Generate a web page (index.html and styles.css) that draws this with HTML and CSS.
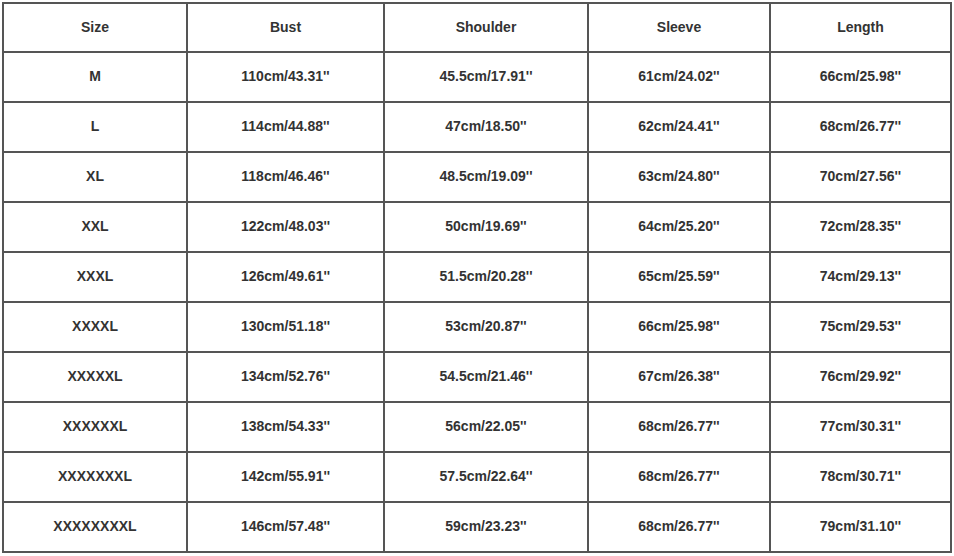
FILE: index.html
```html
<!DOCTYPE html>
<html>
<head>
<meta charset="utf-8">
<link rel="stylesheet" href="styles.css">
</head>
<body>
<div class="chart">
  <div class="cell">Size</div><div class="cell">Bust</div><div class="cell">Shoulder</div><div class="cell">Sleeve</div><div class="cell">Length</div>
  <div class="cell">M</div><div class="cell">110cm/43.31''</div><div class="cell">45.5cm/17.91''</div><div class="cell">61cm/24.02''</div><div class="cell">66cm/25.98''</div>
  <div class="cell">L</div><div class="cell">114cm/44.88''</div><div class="cell">47cm/18.50''</div><div class="cell">62cm/24.41''</div><div class="cell">68cm/26.77''</div>
  <div class="cell">XL</div><div class="cell">118cm/46.46''</div><div class="cell">48.5cm/19.09''</div><div class="cell">63cm/24.80''</div><div class="cell">70cm/27.56''</div>
  <div class="cell">XXL</div><div class="cell">122cm/48.03''</div><div class="cell">50cm/19.69''</div><div class="cell">64cm/25.20''</div><div class="cell">72cm/28.35''</div>
  <div class="cell">XXXL</div><div class="cell">126cm/49.61''</div><div class="cell">51.5cm/20.28''</div><div class="cell">65cm/25.59''</div><div class="cell">74cm/29.13''</div>
  <div class="cell">XXXXL</div><div class="cell">130cm/51.18''</div><div class="cell">53cm/20.87''</div><div class="cell">66cm/25.98''</div><div class="cell">75cm/29.53''</div>
  <div class="cell">XXXXXL</div><div class="cell">134cm/52.76''</div><div class="cell">54.5cm/21.46''</div><div class="cell">67cm/26.38''</div><div class="cell">76cm/29.92''</div>
  <div class="cell">XXXXXXL</div><div class="cell">138cm/54.33''</div><div class="cell">56cm/22.05''</div><div class="cell">68cm/26.77''</div><div class="cell">77cm/30.31''</div>
  <div class="cell">XXXXXXXL</div><div class="cell">142cm/55.91''</div><div class="cell">57.5cm/22.64''</div><div class="cell">68cm/26.77''</div><div class="cell">78cm/30.71''</div>
  <div class="cell">XXXXXXXXL</div><div class="cell">146cm/57.48''</div><div class="cell">59cm/23.23''</div><div class="cell">68cm/26.77''</div><div class="cell">79cm/31.10''</div>
</div>
</body>
</html>
```
FILE: styles.css
```css
html, body {
  margin: 0;
  padding: 0;
  background: #ffffff;
}
body {
  padding: 2px 0 0 2px;
}
.chart {
  display: grid;
  grid-template-columns: 182px 195px 202px 180px 179px;
  grid-template-rows: 47px repeat(10, 48px);
  gap: 2px;
  padding: 2px;
  width: max-content;
  background: #555555;
}
.cell {
  background: #ffffff;
  display: flex;
  align-items: center;
  justify-content: center;
  padding-bottom: 2px;
  font-family: "Liberation Sans", Arial, sans-serif;
  font-weight: bold;
  font-size: 14px;
  color: #333333;
}
```
